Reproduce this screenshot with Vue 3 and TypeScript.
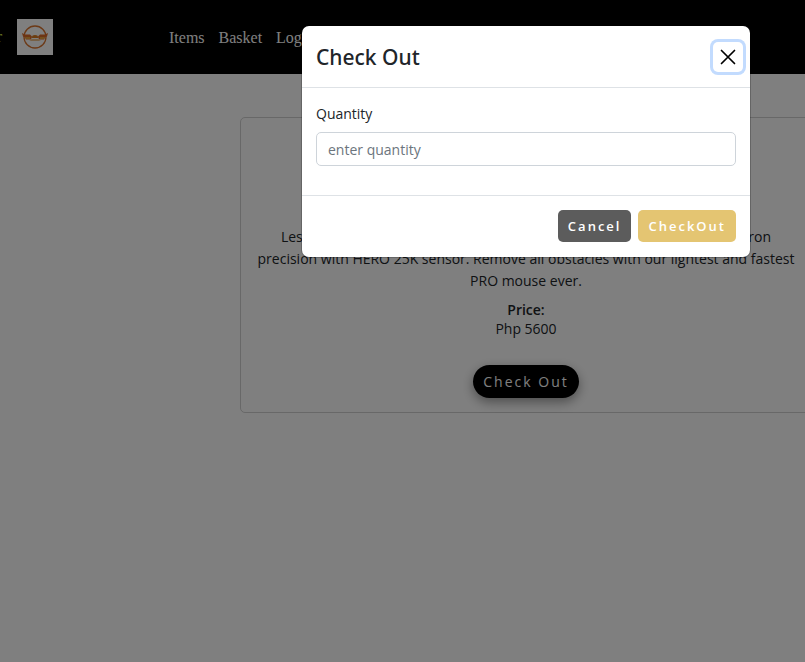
<script setup lang="ts">
import { ref } from 'vue'

const quantity = ref('')
const links: string[] = ['Items', 'Basket', 'Logout']
</script>

<template>
  <div class="viewport">
    <div class="page">
      <header class="navbar">
        <a class="brand" href="#">
          <span class="brand-name">r</span>
          <svg class="logo" viewBox="0 0 36 36" aria-hidden="true">
            <rect width="36" height="36" fill="#fff" />
            <circle cx="18" cy="18" r="11" fill="none" stroke="#d9742f" stroke-width="1.3" />
            <path d="M5 14l3 1.500h5l2 2-1 3H9l-1-2-2-1zM31 14l-3 1.500h-5l-2 2 1 3h5l1-2 2-1z" fill="#dd6a28" />
            <path d="M8 18h5v2H9zM23 18h5l-1 2h-4z" fill="#e9a03c" />
            <path d="M15 18q0-2 3-2t3 2l1 1h-8z" fill="#d97a20" />
            <path d="M12 21l3-1h6l3 1-2 1h-8z" fill="#efc08b" />
          </svg>
        </a>
        <nav class="links">
          <a v-for="link in links" :key="link" href="#">{{ link }}</a>
        </nav>
      </header>

      <main class="content">
        <article class="card">
          <p class="description">
            Less than 63 grams with advanced LIGHTSPEED wireless. Reach sub-micron<br />
            precision with HERO 25K sensor. Remove all obstacles with our lightest and fastest<br />
            PRO mouse ever.
          </p>
          <p class="price"><strong>Price:</strong><span>Php 5600</span></p>
          <button class="buy" type="button">Check Out</button>
        </article>
      </main>

      <div class="backdrop">
        <form class="modal" role="dialog" aria-labelledby="modal-title" @submit.prevent>
          <div class="modal-header">
            <h5 id="modal-title">Check Out</h5>
            <button class="close" type="button" aria-label="Close">
              <svg viewBox="0 0 16 16" aria-hidden="true">
                <path d="M1.500 1.500l13 13M14.500 1.500l-13 13" fill="none" stroke="#000" stroke-width="1.700" stroke-linecap="round" />
              </svg>
            </button>
          </div>
          <div class="modal-body">
            <label for="quantity">Quantity</label>
            <input id="quantity" v-model="quantity" type="text" placeholder="enter quantity" />
          </div>
          <div class="modal-footer">
            <button class="action cancel" type="button">Cancel</button>
            <button class="action confirm" type="submit">CheckOut</button>
          </div>
        </form>
      </div>
    </div>
  </div>
</template>

<style>
body {
  background: #808080;
}
</style>

<style scoped>
* {
  box-sizing: border-box;
}

.viewport {
  overflow: hidden;
  font-family: "Open Sans", "Noto Sans", sans-serif;
  font-size: 14px;
  color: #212529;
}

.page {
  position: relative;
  min-width: 1052px;
  min-height: 100vh;
  background: #fff;
}

.navbar {
  display: flex;
  align-items: center;
  gap: 116px;
  height: 74px;
  background: #000;
  font-family: "Liberation Serif", serif;
  font-size: 16px;
}

.brand {
  display: flex;
  align-items: center;
  gap: 15px;
  text-decoration: none;
  color: #d8e84a;
}

.brand-name {
  display: flex;
  justify-content: flex-end;
  width: 2px;
}

.logo {
  width: 36px;
  height: 36px;
}

.links {
  display: flex;
  gap: 14px;
  padding-top: 2px;
}

.links a {
  color: #fff;
  text-decoration: none;
}

.content {
  padding-top: 43px;
}

.card {
  display: flex;
  flex-direction: column;
  align-items: center;
  width: 572px;
  margin: 0 auto;
  padding: 108px 14px 14px;
  border: 1px solid #d0d0d0;
  border-radius: 5px;
  text-align: center;
}

.description {
  margin: 0 0 8px;
  line-height: 22px;
  white-space: nowrap;
}

.price {
  display: flex;
  flex-direction: column;
  margin: 0 0 27px;
  line-height: 19px;
}

.price strong {
  font-weight: 600;
}

.buy {
  height: 33px;
  padding: 0 10px;
  border: 0;
  border-radius: 17px;
  background: #000;
  box-shadow: 0 4px 12px rgba(0, 0, 0, 0.4);
  color: #fff;
  font: inherit;
  letter-spacing: 2px;
}

.backdrop {
  position: absolute;
  inset: 0;
  padding-top: 26px;
  background: rgba(0, 0, 0, 0.5);
}

.modal {
  width: 448px;
  margin: 0 auto;
  border-radius: 7px;
  background: #fff;
  box-shadow: 0 0 0 1px rgba(0, 0, 0, 0.2);
}

.modal-header {
  display: flex;
  align-items: center;
  justify-content: space-between;
  height: 62px;
  padding: 0 7px 0 14px;
  border-bottom: 1px solid #dee2e6;
}

.modal-header h5 {
  margin: 0;
  font-family: "Noto Sans", sans-serif;
  font-size: 21px;
  font-weight: 500;
}

.close {
  display: grid;
  place-items: center;
  width: 30px;
  height: 30px;
  padding: 0;
  border: 0;
  border-radius: 5px;
  background: #fff;
  box-shadow: 0 0 0 3px #c2dbfe;
}

.close svg {
  width: 16px;
  height: 16px;
}

.modal-body {
  display: flex;
  flex-direction: column;
  gap: 7px;
  padding: 15px 14px 29px;
}

.modal-body label {
  line-height: 22px;
}

.modal-body input {
  width: 100%;
  height: 34px;
  padding: 0 11px;
  border: 1px solid #ced4da;
  border-radius: 5px;
  font: inherit;
}

.modal-body input::placeholder {
  color: #6c757d;
  opacity: 1;
}

.modal-footer {
  display: flex;
  justify-content: flex-end;
  gap: 7px;
  padding: 14px 14px 15px;
  border-top: 1px solid #dee2e6;
}

.action {
  height: 32px;
  padding: 0 10px;
  border: 0;
  border-radius: 5px;
  color: #fff;
  font: inherit;
  font-size: 13px;
  font-weight: 600;
  letter-spacing: 2px;
}

.cancel {
  background: #5c5c5c;
}

.confirm {
  background: #e4c572;
}
</style>
